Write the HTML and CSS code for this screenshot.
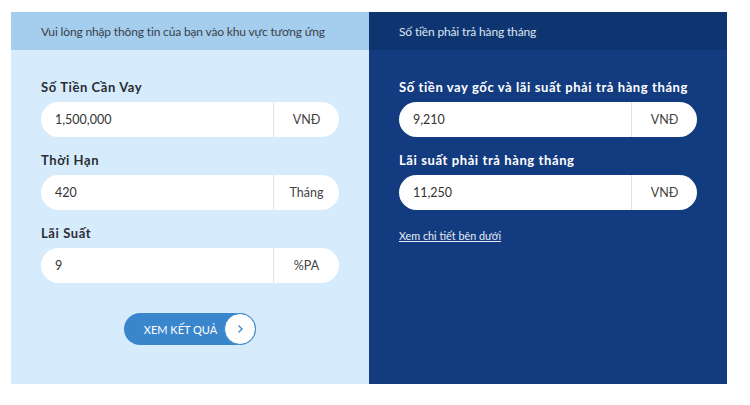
FILE: index.html
```html
<!DOCTYPE html>
<html lang="vi">
<head>
    <meta charset="UTF-8">
    <title>Tính khoản vay</title>
    <link rel="stylesheet" href="styles.css">
</head>
<body>

    <div class="calc">

        <!-- Input panel -->
        <div class="panel panel-input">
            <div class="panel-head">Vui lòng nhập thông tin của bạn vào khu vực tương ứng</div>
            <div class="panel-body">
                <div class="field">
                    <label>Số Tiền Cần Vay</label>
                    <div class="box">
                        <span class="value">1,500,000</span>
                        <span class="unit">VNĐ</span>
                    </div>
                </div>
                <div class="field">
                    <label>Thời Hạn</label>
                    <div class="box">
                        <span class="value">420</span>
                        <span class="unit">Tháng</span>
                    </div>
                </div>
                <div class="field">
                    <label>Lãi Suất</label>
                    <div class="box">
                        <span class="value">9</span>
                        <span class="unit">%PA</span>
                    </div>
                </div>
                <div class="actions">
                    <button class="result-btn">
                        <span class="result-text">XEM KẾT QUẢ</span>
                        <span class="result-icon">
                            <svg width="10" height="10" viewBox="0 0 10 10"><path d="M3.5 1.5 L7 5 L3.5 8.5" fill="none" stroke="#3a86cc" stroke-width="1.3"/></svg>
                        </span>
                    </button>
                </div>
            </div>
        </div>

        <!-- Result panel -->
        <div class="panel panel-result">
            <div class="panel-head">Số tiền phải trả hàng tháng</div>
            <div class="panel-body">
                <div class="field">
                    <label>Số tiền vay gốc và lãi suất phải trả hàng tháng</label>
                    <div class="box">
                        <span class="value">9,210</span>
                        <span class="unit">VNĐ</span>
                    </div>
                </div>
                <div class="field">
                    <label>Lãi suất phải trả hàng tháng</label>
                    <div class="box">
                        <span class="value">11,250</span>
                        <span class="unit">VNĐ</span>
                    </div>
                </div>
                <a class="detail-link" href="#">Xem chi tiết bên dưới</a>
            </div>
        </div>

    </div>

</body>
</html>
```

FILE: styles.css
```css
body {
    font-family: Lato, "Noto Sans", sans-serif;
    background: #ffffff;
    margin: 0;
    padding: 12px 0 0 11px;
}

.calc {
    display: grid;
    grid-template-columns: 358px 358px;
    height: 372px;
}

.panel {
    display: flex;
    flex-direction: column;
}

    .panel-head {
        height: 38px;
        display: flex;
        align-items: center;
        padding-left: 30px;
        font-size: 12px;
        letter-spacing: -0.15px;
    }

    .panel-body {
        flex-grow: 1;
        padding: 28px 30px 0 30px;
    }

.panel-input .panel-head {
    background: #a4cdee;
    color: #3a3f47;
}

.panel-input .panel-body {
    background: #d6ebfb;
}

.panel-result .panel-head {
    background: #0f3570;
    color: #dce6f4;
}

.panel-result .panel-body {
    background: #133c80;
}

.field {
    margin-bottom: 14px;
}

    .field label {
        display: block;
        font-size: 13px;
        font-weight: bold;
        line-height: 18px;
        letter-spacing: 0.6px;
        margin-bottom: 6px;
        white-space: nowrap;
        color: #2a2d33;
    }

.panel-result .field label {
    color: #ffffff;
}

.box {
    display: flex;
    height: 35px;
    width: 298px;
    background: #ffffff;
    border-radius: 18px;
    font-size: 12.5px;
    color: #333333;
}

    .box .value {
        flex-grow: 1;
        display: flex;
        align-items: center;
        padding-left: 14px;
        border-right: 1px solid #e2e2e2;
    }

    .box .unit {
        width: 65px;
        display: flex;
        align-items: center;
        justify-content: center;
        color: #444;
    }

.actions {
    display: flex;
    justify-content: center;
    padding-top: 16px;
}

.result-btn {
    display: flex;
    align-items: center;
    height: 32px;
    padding: 0;
    background: #3a86cc;
    border: none;
    border-radius: 16px;
    cursor: pointer;
    font-family: inherit;
}

    .result-text {
        color: #ffffff;
        font-size: 11px;
        padding: 0 7px 0 20px;
    }

    .result-icon {
        width: 30px;
        height: 30px;
        border: 1px solid #3a86cc;
        border-radius: 50%;
        background: #ffffff;
        display: flex;
        align-items: center;
        justify-content: center;
    }

.detail-link {
    display: inline-block;
    margin-top: -2px;
    font-size: 10.8px;
    color: #e6ecf6;
    text-decoration: underline;
}
```
